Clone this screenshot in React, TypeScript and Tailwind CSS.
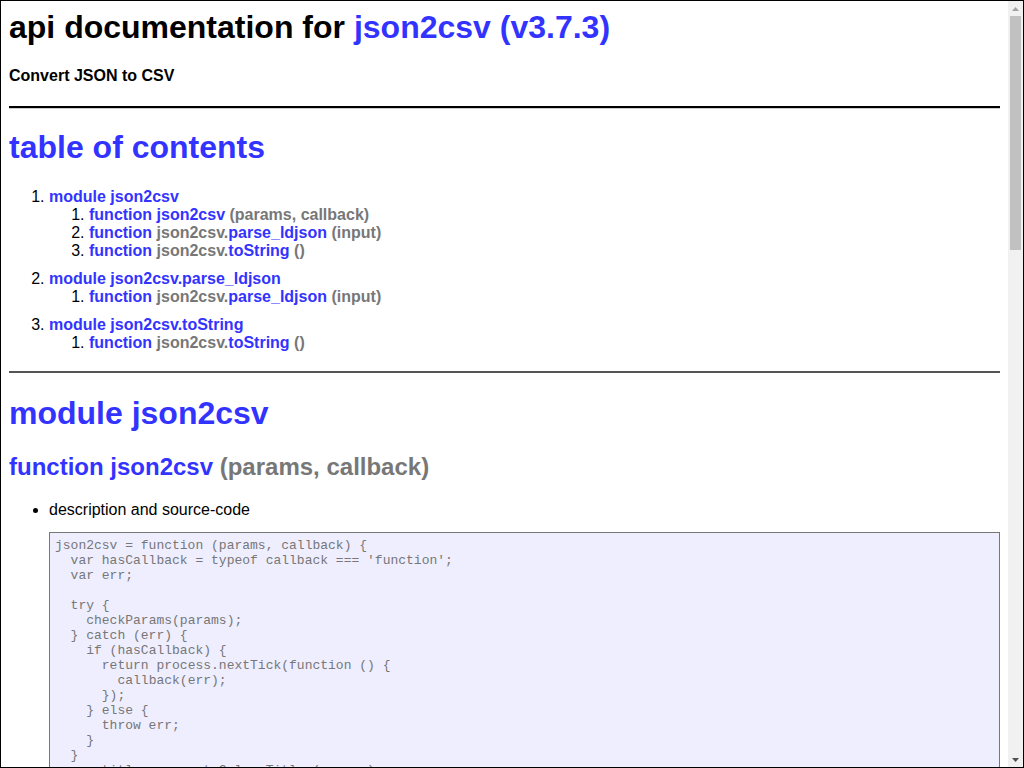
import React from 'react';

type TocFn = { id: string; prefix?: string; name: string; sig: string };
type TocModule = { id: string; name: string; fns: TocFn[] };

const fnJson2csv: TocFn = { id: 'json2csv.json2csv', name: 'json2csv', sig: '(params, callback)' };
const fnParse: TocFn = { id: 'json2csv.parse_ldjson', prefix: 'json2csv.', name: 'parse_ldjson', sig: '(input)' };
const fnToString: TocFn = { id: 'json2csv.toString', prefix: 'json2csv.', name: 'toString', sig: '()' };

const toc: TocModule[] = [
  { id: 'json2csv', name: 'json2csv', fns: [fnJson2csv, fnParse, fnToString] },
  { id: 'json2csv.parse_ldjson', name: 'json2csv.parse_ldjson', fns: [fnParse] },
  { id: 'json2csv.toString', name: 'json2csv.toString', fns: [fnToString] },
];

const sources: Record<string, { source: string; example: string }> = {
  'json2csv.json2csv': {
    source: `json2csv = function (params, callback) {
  var hasCallback = typeof callback === 'function';
  var err;

  try {
    checkParams(params);
  } catch (err) {
    if (hasCallback) {
      return process.nextTick(function () {
        callback(err);
      });
    } else {
      throw err;
    }
  }
  var titles = createColumnTitles(params);
  var csv = createColumnContent(params, titles);
  if (hasCallback) {
    return process.nextTick(function () {
      callback(null, csv);
    });
  } else {
    return csv;
  }
}`,
    example: `...
var json2csv = require('json2csv');
var fields = ['car', 'price', 'color'];
var myCars = [
  {
    "car": "Audi",
    "price": 40000,
    "color": "blue"
  }, {
    "car": "BMW",
    "price": 35000,
    "color": "black"
  }, {
    "car": "Porsche",
    "price": 60000,
    "color": "green"
  }
];
var csv = json2csv({ data: myCars, fields: fields });

fs.writeFile('file.csv', csv, function(err) {
  if (err) throw err;
  console.log('file saved');
});
...`,
  },
  'json2csv.parse_ldjson': {
    source: `parse_ldjson = function (input) {
  return input
    .split('\\n')
    .map(function (line) {
      return line.trim();
    })
    .filter(function (line) {
      return line !== '';
    })
    .map(function (line) {
      return JSON.parse(line);
    });
}`,
    example: `n/a`,
  },
  'json2csv.toString': {
    source: `toString = function () {
    return toString;
}`,
    example: `...
var csv = json2csv({ data: myCars, fields: fields, del: '\\t' });
console.log(csv.toString());
...`,
  },
};

const linkCls = 'text-[#33f] font-bold no-underline hover:underline';

const FnLabel: React.FC<{ fn: TocFn }> = ({ fn }) => (
  <a href={'#apidoc.element.' + fn.id} className={linkCls}>
    function{' '}
    {fn.prefix && <span className="text-[#777]">{fn.prefix}</span>}
    {fn.name} <span className="text-[#777]">{fn.sig}</span>
  </a>
);

const CodePre: React.FC<{ children: string }> = ({ children }) => (
  <pre className="mt-[13px] mb-[13px] overflow-auto whitespace-pre-wrap border border-[#777] bg-[#eef] p-[5px] font-['Liberation_Mono',monospace] text-[13px] leading-[normal] text-[#777]">
    {children}
  </pre>
);

// static picture of the window scrollbar seen in the screenshot
const ScrollBar: React.FC = () => (
  <div className="flex w-[15px] shrink-0 flex-col bg-[#f1f1f1]">
    <div className="flex h-[15px] items-center justify-center">
      <svg width="7" height="4" viewBox="0 0 7 4">
        <path d="M0 4 L3.5 0 L7 4 Z" fill="#a3a3a3" />
      </svg>
    </div>
    <div className="flex-1 px-[2px]">
      <div className="h-[234px] bg-[#c1c1c1]" />
    </div>
    <div className="flex h-[15px] items-center justify-center">
      <svg width="7" height="4" viewBox="0 0 7 4">
        <path d="M0 0 L7 0 L3.5 4 Z" fill="#505050" />
      </svg>
    </div>
  </div>
);

export default function App() {
  return (
    <div className="flex h-screen border border-black bg-white">
      <div className="min-w-0 flex-1 overflow-y-auto px-2 pt-[8px] pb-2 font-['Liberation_Sans',Arial,sans-serif] leading-[normal] text-black [scrollbar-width:none]">
        <h1 className="text-[32px] font-bold">
          api documentation for{' '}
          <a href="#" className={linkCls}>
            json2csv (v3.7.3)
          </a>
        </h1>
        <h4 className="mt-[18px] text-base font-bold">Convert JSON to CSV</h4>
        <div className="mt-[18px] border-t-2 border-b border-t-black border-b-[#ccc]" />

        {/* Table of contents */}
        <h1 className="mt-[20px] text-[32px] font-bold">
          <a href="#apidoc.tableOfContents" className={linkCls}>
            table of contents
          </a>
        </h1>
        <ol className="mt-[22px] list-decimal pl-10">
          {toc.map((mod, i) => (
            <li key={mod.id} className={i === 0 ? '' : 'mt-[10px]'}>
              <a href={'#apidoc.module.' + mod.id} className={linkCls}>
                module {mod.name}
              </a>
              <ol className="list-decimal pl-10">
                {mod.fns.map((fn) => (
                  <li key={fn.id}>
                    <FnLabel fn={fn} />
                  </li>
                ))}
              </ol>
            </li>
          ))}
        </ol>

        {/* Modules */}
        {toc.map((mod) => (
          <div key={mod.id} className="mt-[19px] border-t-2 border-[#555]">
            <h1 className="mt-[22px] text-[32px] font-bold">
              <a href={'#apidoc.module.' + mod.id} className={linkCls}>
                module {mod.name}
              </a>
            </h1>
            {mod.fns.map((fn) => (
              <div key={fn.id}>
                <h2 className="mt-[19px] text-2xl font-bold">
                  <FnLabel fn={fn} />
                </h2>
                <ul className="mt-[18px] mb-4 list-disc pl-10">
                  <li>
                    description and source-code
                    <CodePre>{sources[fn.id].source}</CodePre>
                  </li>
                  <li>
                    example usage
                    <CodePre>{sources[fn.id].example}</CodePre>
                  </li>
                </ul>
              </div>
            ))}
          </div>
        ))}

        <div className="mt-5 border-t-2 border-[#555] pt-5 text-center">
          [ this document was created with{' '}
          <a href="#" className={linkCls}>
            utility2
          </a>{' '}
          ]
        </div>
      </div>
      <ScrollBar />
    </div>
  );
}
